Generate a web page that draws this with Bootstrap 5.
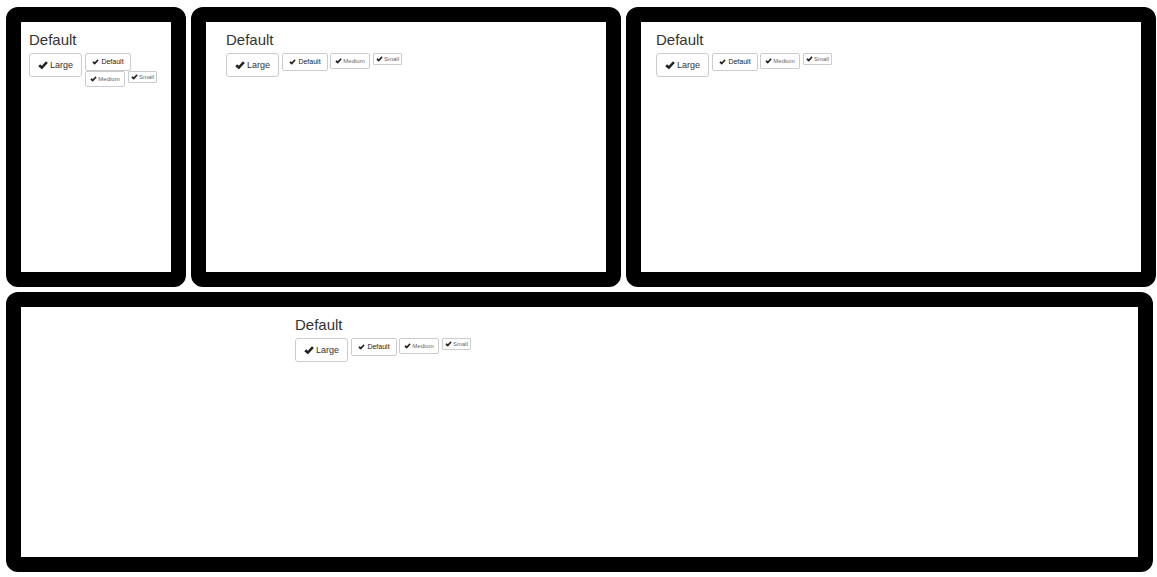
<!DOCTYPE html>
<html lang="en">
<head>
<meta charset="utf-8">
<meta name="viewport" content="width=device-width, initial-scale=1">
<title>Button sizes</title>
<link href="https://cdn.jsdelivr.net/npm/bootstrap@5.3.0/dist/css/bootstrap.min.css" rel="stylesheet">
<style>
body { font-family: "Liberation Sans", Arial, sans-serif; color: #333; background: #fff; }
.devices { padding: 7px 1px 5px 6px; gap: 5px; }
.device-row { gap: 5px; grid-template-columns: 18fr 43fr 53fr; }
.device { border: 15px solid #000; border-radius: 12px; min-height: 280px; min-width: 0; padding-top: 9px; }
.device-phone { padding-left: 8px; }
.device-tablet { padding-left: 20px; }
.device-laptop { padding-left: 15px; }
.device-desktop { margin-right: 3px; }
.desktop-content { max-width: 569px; }
.size-title { font-size: 15px; line-height: 18px; font-weight: 400; margin-bottom: 4px; }
.btn-size { color: #333; background: #fff; border: 1px solid #ccc; padding: 0; border-radius: 2px; display: flex; align-items: center; justify-content: center; gap: 2px; float: left; white-space: nowrap; }
.btn-size svg { fill: #222; flex: none; width: 7px; height: 6px; }
.size-large { width: 53px; height: 24px; font-size: 9px; line-height: 12px; border-radius: 3px; margin-right: 3px; }
.size-large svg { width: 10px; height: 9px; }
.size-default { width: 46px; height: 18px; font-size: 7px; line-height: 10px; margin-right: 2px; color: #222; }
.size-medium { width: 40px; height: 16px; font-size: 6px; line-height: 8px; margin-right: 3px; color: #666; gap: 1px; }
.size-small { width: 29px; height: 12px; font-size: 6px; line-height: 8px; border-radius: 1px; color: #666; gap: 1px; }
</style>
</head>
<body>
<svg class="d-none" aria-hidden="true">
  <symbol id="check" viewBox="0 0 20 18"><path d="M1 10.2 4 7.1Q4.5 6.7 5 7.1L7.7 9.6 15.5 1.2Q16 .8 16.5 1.2L19.2 3.7Q19.7 4.2 19.2 4.7L8.5 16.2Q7.8 16.9 7.1 16.2L1 11.2Q.5 10.7 1 10.2Z"/></symbol>
</svg>
<main class="devices d-flex flex-column">
  <div class="device-row d-grid">
    <section class="device device-phone">
      <h2 class="size-title">Default</h2>
      <div class="clearfix">
        <button type="button" class="btn btn-size size-large"><svg aria-hidden="true"><use href="#check"/></svg>Large</button>
        <button type="button" class="btn btn-size size-default"><svg aria-hidden="true"><use href="#check"/></svg>Default</button>
        <button type="button" class="btn btn-size size-medium"><svg aria-hidden="true"><use href="#check"/></svg>Medium</button>
        <button type="button" class="btn btn-size size-small"><svg aria-hidden="true"><use href="#check"/></svg>Small</button>
      </div>
    </section>
    <section class="device device-tablet">
      <h2 class="size-title">Default</h2>
      <div class="clearfix">
        <button type="button" class="btn btn-size size-large"><svg aria-hidden="true"><use href="#check"/></svg>Large</button>
        <button type="button" class="btn btn-size size-default"><svg aria-hidden="true"><use href="#check"/></svg>Default</button>
        <button type="button" class="btn btn-size size-medium"><svg aria-hidden="true"><use href="#check"/></svg>Medium</button>
        <button type="button" class="btn btn-size size-small"><svg aria-hidden="true"><use href="#check"/></svg>Small</button>
      </div>
    </section>
    <section class="device device-laptop">
      <h2 class="size-title">Default</h2>
      <div class="clearfix">
        <button type="button" class="btn btn-size size-large"><svg aria-hidden="true"><use href="#check"/></svg>Large</button>
        <button type="button" class="btn btn-size size-default"><svg aria-hidden="true"><use href="#check"/></svg>Default</button>
        <button type="button" class="btn btn-size size-medium"><svg aria-hidden="true"><use href="#check"/></svg>Medium</button>
        <button type="button" class="btn btn-size size-small"><svg aria-hidden="true"><use href="#check"/></svg>Small</button>
      </div>
    </section>
  </div>
  <section class="device device-desktop">
    <div class="desktop-content mx-auto">
      <h2 class="size-title">Default</h2>
      <div class="clearfix">
        <button type="button" class="btn btn-size size-large"><svg aria-hidden="true"><use href="#check"/></svg>Large</button>
        <button type="button" class="btn btn-size size-default"><svg aria-hidden="true"><use href="#check"/></svg>Default</button>
        <button type="button" class="btn btn-size size-medium"><svg aria-hidden="true"><use href="#check"/></svg>Medium</button>
        <button type="button" class="btn btn-size size-small"><svg aria-hidden="true"><use href="#check"/></svg>Small</button>
      </div>
    </div>
  </section>
</main>
<script src="https://cdn.jsdelivr.net/npm/bootstrap@5.3.0/dist/js/bootstrap.bundle.min.js"></script>
</body>
</html>
